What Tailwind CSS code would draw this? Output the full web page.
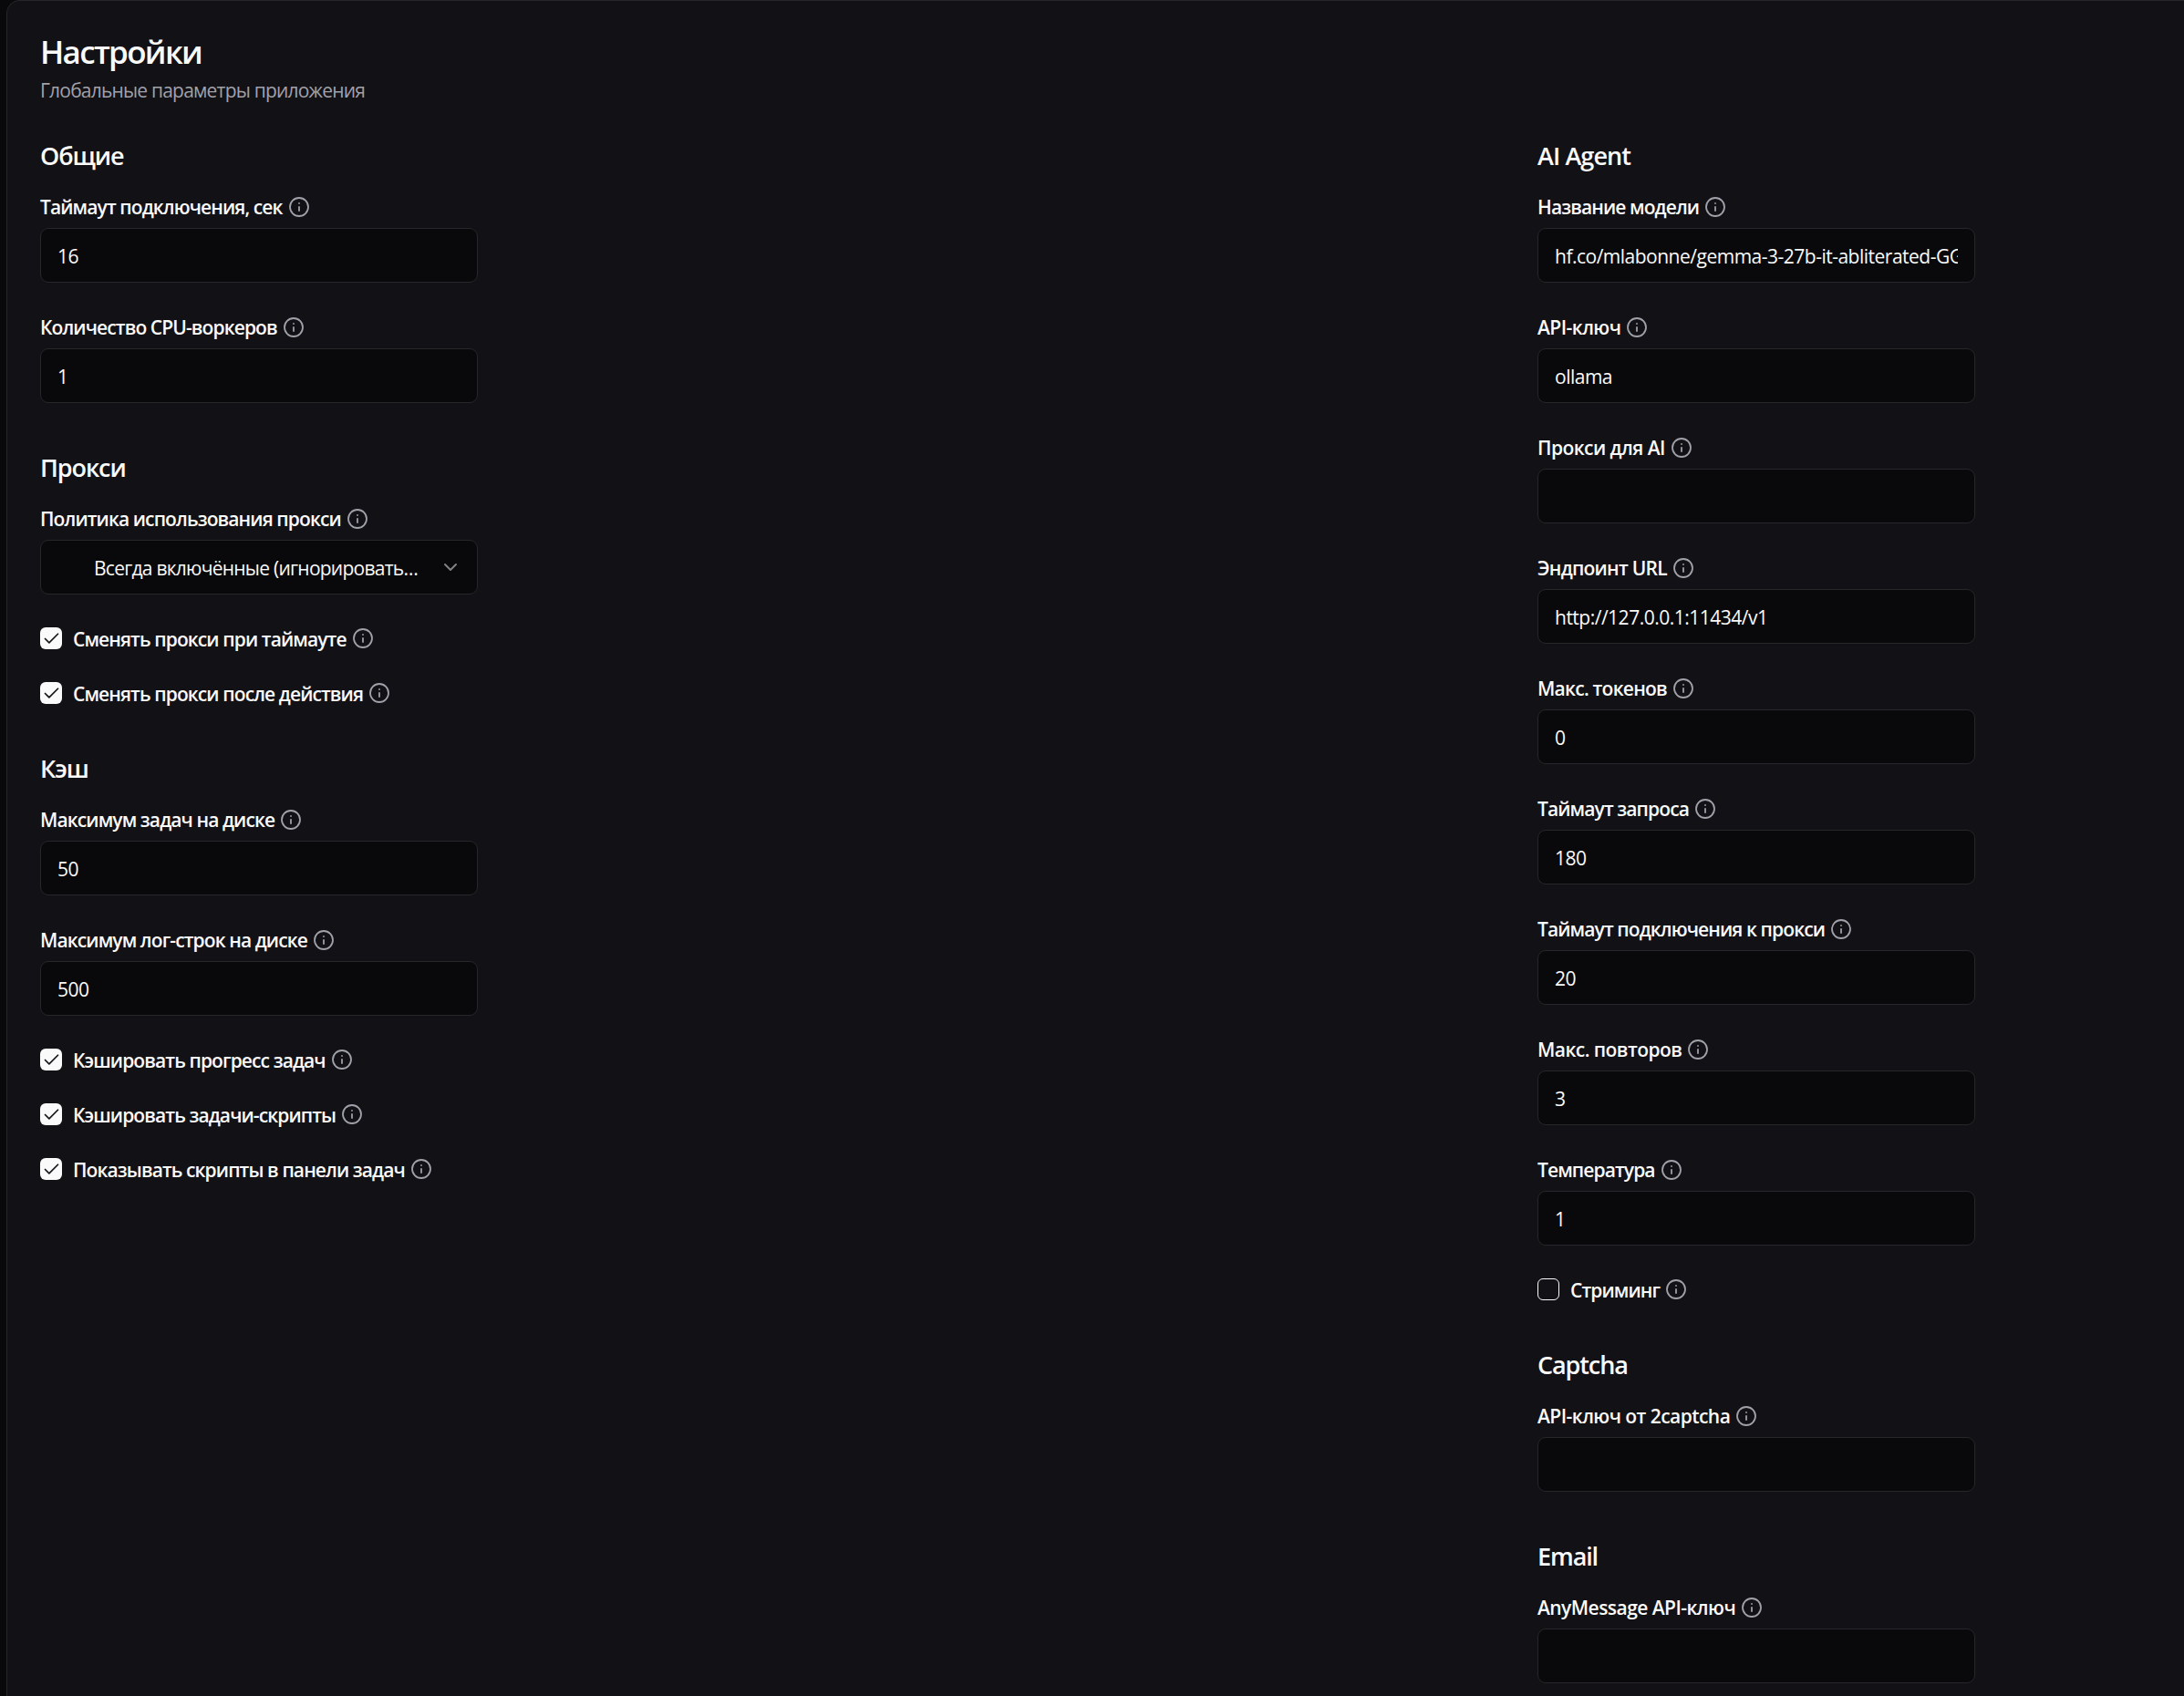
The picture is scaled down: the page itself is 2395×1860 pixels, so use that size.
<!DOCTYPE html>
<html lang="ru">
<head>
    <meta charset="UTF-8">
    <title>Настройки</title>
    <script src="https://cdn.jsdelivr.net/npm/@tailwindcss/browser@4"></script>
</head>
<body class="bg-[#09090b] text-[#fafafa] font-['Open_Sans',sans-serif] h-[1860px] overflow-hidden">
    <main class="ml-[7px] h-[1860px] overflow-hidden bg-[#111116] border-l border-t border-[#27272a] rounded-tl-[15px] pl-[36px] pr-[36px] pt-[32px]">
        <h1 class="text-[35px] leading-[48px] font-semibold tracking-[-1.7px]">Настройки</h1>
        <p class="text-[21px] leading-[30px] text-[#a1a1aa] tracking-[-0.8px] mt-[3px]">Глобальные параметры приложения</p>

        <div class="grid grid-cols-[1642px_1fr] mt-[37px]">
            <!-- Left column -->
            <div class="flex flex-col gap-[51px]">
                <section class="w-[480px]">
                    <h2 class="text-[27px] leading-[40px] font-semibold tracking-[-1.1px] mb-[23px]">Общие</h2>
                    <div class="flex flex-col gap-[36px]">
                        <div>
                            <label class="flex items-center gap-[6px] h-[27px] mb-[9px] text-[21px] font-[550] tracking-[-0.9px]">Таймаут подключения, сек
                                <svg class="size-[24px] -mt-[2px] text-[#a1a1aa]" viewBox="0 0 24 24" fill="none" stroke="currentColor" stroke-width="1.8" stroke-linecap="round" stroke-linejoin="round"><circle cx="12" cy="12" r="10"/><path d="M12 16v-4"/><path d="M12 8h.01"/></svg>
                            </label>
                            <input type="text" value="16" class="w-[480px] h-[60px] px-[18px] pt-[2px] rounded-[9px] bg-[#09090b] border border-[#27272a] text-[21px] tracking-[-0.5px] outline-none">
                        </div>
                        <div>
                            <label class="flex items-center gap-[6px] h-[27px] mb-[9px] text-[21px] font-[550] tracking-[-0.9px]">Количество CPU-воркеров
                                <svg class="size-[24px] -mt-[2px] text-[#a1a1aa]" viewBox="0 0 24 24" fill="none" stroke="currentColor" stroke-width="1.8" stroke-linecap="round" stroke-linejoin="round"><circle cx="12" cy="12" r="10"/><path d="M12 16v-4"/><path d="M12 8h.01"/></svg>
                            </label>
                            <input type="text" value="1" class="w-[480px] h-[60px] px-[18px] pt-[2px] rounded-[9px] bg-[#09090b] border border-[#27272a] text-[21px] tracking-[-0.5px] outline-none">
                        </div>
                    </div>
                </section>

                <section class="w-[480px]">
                    <h2 class="text-[27px] leading-[40px] font-semibold tracking-[-1.1px] mb-[23px]">Прокси</h2>
                    <div class="flex flex-col gap-[36px]">
                        <div>
                            <label class="flex items-center gap-[6px] h-[27px] mb-[9px] text-[21px] font-[550] tracking-[-0.9px]">Политика использования прокси
                                <svg class="size-[24px] -mt-[2px] text-[#a1a1aa]" viewBox="0 0 24 24" fill="none" stroke="currentColor" stroke-width="1.8" stroke-linecap="round" stroke-linejoin="round"><circle cx="12" cy="12" r="10"/><path d="M12 16v-4"/><path d="M12 8h.01"/></svg>
                            </label>
                            <button class="flex items-center justify-between w-[480px] h-[60px] pl-[58px] pr-[17px] pt-[3px] rounded-[9px] bg-[#09090b] border border-[#27272a] text-[21px] tracking-[-0.75px]">
                                <span class="whitespace-nowrap">Всегда включённые (игнорировать…</span>
                                <svg class="size-[24px] -mt-[3px] shrink-0 text-[#fafafa]/50" viewBox="0 0 24 24" fill="none" stroke="currentColor" stroke-width="2" stroke-linecap="round" stroke-linejoin="round"><path d="m6 9 6 6 6-6"/></svg>
                            </button>
                        </div>
                        <label class="flex items-center gap-[12px] h-[24px] text-[21px] font-[550] tracking-[-0.9px]">
                            <span class="flex items-center justify-center size-[24px] rounded-[6px] bg-[#fafafa] text-[#18181b]"><svg class="size-[21px]" viewBox="0 0 24 24" fill="none" stroke="currentColor" stroke-width="2" stroke-linecap="round" stroke-linejoin="round"><path d="M20 6 9 17l-5-5"/></svg></span>
                            <span class="mt-[3px]">Сменять прокси при таймауте</span>
                            <svg class="size-[24px] -ml-[6px] text-[#a1a1aa]" viewBox="0 0 24 24" fill="none" stroke="currentColor" stroke-width="1.8" stroke-linecap="round" stroke-linejoin="round"><circle cx="12" cy="12" r="10"/><path d="M12 16v-4"/><path d="M12 8h.01"/></svg>
                        </label>
                        <label class="flex items-center gap-[12px] h-[24px] text-[21px] font-[550] tracking-[-0.9px]">
                            <span class="flex items-center justify-center size-[24px] rounded-[6px] bg-[#fafafa] text-[#18181b]"><svg class="size-[21px]" viewBox="0 0 24 24" fill="none" stroke="currentColor" stroke-width="2" stroke-linecap="round" stroke-linejoin="round"><path d="M20 6 9 17l-5-5"/></svg></span>
                            <span class="mt-[3px]">Сменять прокси после действия</span>
                            <svg class="size-[24px] -ml-[6px] text-[#a1a1aa]" viewBox="0 0 24 24" fill="none" stroke="currentColor" stroke-width="1.8" stroke-linecap="round" stroke-linejoin="round"><circle cx="12" cy="12" r="10"/><path d="M12 16v-4"/><path d="M12 8h.01"/></svg>
                        </label>
                    </div>
                </section>

                <section class="w-[480px]">
                    <h2 class="text-[27px] leading-[40px] font-semibold tracking-[-1.1px] mb-[23px]">Кэш</h2>
                    <div class="flex flex-col gap-[36px]">
                        <div>
                            <label class="flex items-center gap-[6px] h-[27px] mb-[9px] text-[21px] font-[550] tracking-[-0.9px]">Максимум задач на диске
                                <svg class="size-[24px] -mt-[2px] text-[#a1a1aa]" viewBox="0 0 24 24" fill="none" stroke="currentColor" stroke-width="1.8" stroke-linecap="round" stroke-linejoin="round"><circle cx="12" cy="12" r="10"/><path d="M12 16v-4"/><path d="M12 8h.01"/></svg>
                            </label>
                            <input type="text" value="50" class="w-[480px] h-[60px] px-[18px] pt-[2px] rounded-[9px] bg-[#09090b] border border-[#27272a] text-[21px] tracking-[-0.5px] outline-none">
                        </div>
                        <div>
                            <label class="flex items-center gap-[6px] h-[27px] mb-[9px] text-[21px] font-[550] tracking-[-0.9px]">Максимум лог-строк на диске
                                <svg class="size-[24px] -mt-[2px] text-[#a1a1aa]" viewBox="0 0 24 24" fill="none" stroke="currentColor" stroke-width="1.8" stroke-linecap="round" stroke-linejoin="round"><circle cx="12" cy="12" r="10"/><path d="M12 16v-4"/><path d="M12 8h.01"/></svg>
                            </label>
                            <input type="text" value="500" class="w-[480px] h-[60px] px-[18px] pt-[2px] rounded-[9px] bg-[#09090b] border border-[#27272a] text-[21px] tracking-[-0.5px] outline-none">
                        </div>
                        <label class="flex items-center gap-[12px] h-[24px] text-[21px] font-[550] tracking-[-0.9px]">
                            <span class="flex items-center justify-center size-[24px] rounded-[6px] bg-[#fafafa] text-[#18181b]"><svg class="size-[21px]" viewBox="0 0 24 24" fill="none" stroke="currentColor" stroke-width="2" stroke-linecap="round" stroke-linejoin="round"><path d="M20 6 9 17l-5-5"/></svg></span>
                            <span class="mt-[3px]">Кэшировать прогресс задач</span>
                            <svg class="size-[24px] -ml-[6px] text-[#a1a1aa]" viewBox="0 0 24 24" fill="none" stroke="currentColor" stroke-width="1.8" stroke-linecap="round" stroke-linejoin="round"><circle cx="12" cy="12" r="10"/><path d="M12 16v-4"/><path d="M12 8h.01"/></svg>
                        </label>
                        <label class="flex items-center gap-[12px] h-[24px] text-[21px] font-[550] tracking-[-0.9px]">
                            <span class="flex items-center justify-center size-[24px] rounded-[6px] bg-[#fafafa] text-[#18181b]"><svg class="size-[21px]" viewBox="0 0 24 24" fill="none" stroke="currentColor" stroke-width="2" stroke-linecap="round" stroke-linejoin="round"><path d="M20 6 9 17l-5-5"/></svg></span>
                            <span class="mt-[3px]">Кэшировать задачи-скрипты</span>
                            <svg class="size-[24px] -ml-[6px] text-[#a1a1aa]" viewBox="0 0 24 24" fill="none" stroke="currentColor" stroke-width="1.8" stroke-linecap="round" stroke-linejoin="round"><circle cx="12" cy="12" r="10"/><path d="M12 16v-4"/><path d="M12 8h.01"/></svg>
                        </label>
                        <label class="flex items-center gap-[12px] h-[24px] whitespace-nowrap text-[21px] font-[550] tracking-[-0.9px]">
                            <span class="flex items-center justify-center size-[24px] rounded-[6px] bg-[#fafafa] text-[#18181b]"><svg class="size-[21px]" viewBox="0 0 24 24" fill="none" stroke="currentColor" stroke-width="2" stroke-linecap="round" stroke-linejoin="round"><path d="M20 6 9 17l-5-5"/></svg></span>
                            <span class="mt-[3px]">Показывать скрипты в панели задач</span>
                            <svg class="size-[24px] -ml-[6px] text-[#a1a1aa]" viewBox="0 0 24 24" fill="none" stroke="currentColor" stroke-width="1.8" stroke-linecap="round" stroke-linejoin="round"><circle cx="12" cy="12" r="10"/><path d="M12 16v-4"/><path d="M12 8h.01"/></svg>
                        </label>
                    </div>
                </section>
            </div>

            <!-- Right column -->
            <div class="flex flex-col gap-[51px]">
                <section class="w-[480px]">
                    <h2 class="text-[27px] leading-[40px] font-semibold tracking-[-0.9px] mb-[23px]">AI Agent</h2>
                    <div class="flex flex-col gap-[36px]">
                        <div>
                            <label class="flex items-center gap-[6px] h-[27px] mb-[9px] text-[21px] font-[550] tracking-[-0.9px]">Название модели
                                <svg class="size-[24px] -mt-[2px] text-[#a1a1aa]" viewBox="0 0 24 24" fill="none" stroke="currentColor" stroke-width="1.8" stroke-linecap="round" stroke-linejoin="round"><circle cx="12" cy="12" r="10"/><path d="M12 16v-4"/><path d="M12 8h.01"/></svg>
                            </label>
                            <input type="text" value="hf.co/mlabonne/gemma-3-27b-it-abliterated-GGUF:Q4_K_M" class="w-[480px] h-[60px] px-[18px] pt-[2px] rounded-[9px] bg-[#09090b] border border-[#27272a] text-[21px] tracking-[-0.5px] outline-none">
                        </div>
                        <div>
                            <label class="flex items-center gap-[6px] h-[27px] mb-[9px] text-[21px] font-[550] tracking-[-0.55px]">API-ключ
                                <svg class="size-[24px] -mt-[2px] text-[#a1a1aa]" viewBox="0 0 24 24" fill="none" stroke="currentColor" stroke-width="1.8" stroke-linecap="round" stroke-linejoin="round"><circle cx="12" cy="12" r="10"/><path d="M12 16v-4"/><path d="M12 8h.01"/></svg>
                            </label>
                            <input type="text" value="ollama" class="w-[480px] h-[60px] px-[18px] pt-[2px] rounded-[9px] bg-[#09090b] border border-[#27272a] text-[21px] tracking-[-0.5px] outline-none">
                        </div>
                        <div>
                            <label class="flex items-center gap-[6px] h-[27px] mb-[9px] text-[21px] font-[550] tracking-[-0.55px]">Прокси для AI
                                <svg class="size-[24px] -mt-[2px] text-[#a1a1aa]" viewBox="0 0 24 24" fill="none" stroke="currentColor" stroke-width="1.8" stroke-linecap="round" stroke-linejoin="round"><circle cx="12" cy="12" r="10"/><path d="M12 16v-4"/><path d="M12 8h.01"/></svg>
                            </label>
                            <input type="text" value="" class="w-[480px] h-[60px] px-[18px] pt-[2px] rounded-[9px] bg-[#09090b] border border-[#27272a] text-[21px] tracking-[-0.5px] outline-none">
                        </div>
                        <div>
                            <label class="flex items-center gap-[6px] h-[27px] mb-[9px] text-[21px] font-[550] tracking-[-0.75px]">Эндпоинт URL
                                <svg class="size-[24px] -mt-[2px] text-[#a1a1aa]" viewBox="0 0 24 24" fill="none" stroke="currentColor" stroke-width="1.8" stroke-linecap="round" stroke-linejoin="round"><circle cx="12" cy="12" r="10"/><path d="M12 16v-4"/><path d="M12 8h.01"/></svg>
                            </label>
                            <input type="text" value="http://127.0.0.1:11434/v1" class="w-[480px] h-[60px] px-[18px] pt-[2px] rounded-[9px] bg-[#09090b] border border-[#27272a] text-[21px] tracking-[-0.5px] outline-none">
                        </div>
                        <div>
                            <label class="flex items-center gap-[6px] h-[27px] mb-[9px] text-[21px] font-[550] tracking-[-0.75px]">Макс. токенов
                                <svg class="size-[24px] -mt-[2px] text-[#a1a1aa]" viewBox="0 0 24 24" fill="none" stroke="currentColor" stroke-width="1.8" stroke-linecap="round" stroke-linejoin="round"><circle cx="12" cy="12" r="10"/><path d="M12 16v-4"/><path d="M12 8h.01"/></svg>
                            </label>
                            <input type="text" value="0" class="w-[480px] h-[60px] px-[18px] pt-[2px] rounded-[9px] bg-[#09090b] border border-[#27272a] text-[21px] tracking-[-0.5px] outline-none">
                        </div>
                        <div>
                            <label class="flex items-center gap-[6px] h-[27px] mb-[9px] text-[21px] font-[550] tracking-[-0.9px]">Таймаут запроса
                                <svg class="size-[24px] -mt-[2px] text-[#a1a1aa]" viewBox="0 0 24 24" fill="none" stroke="currentColor" stroke-width="1.8" stroke-linecap="round" stroke-linejoin="round"><circle cx="12" cy="12" r="10"/><path d="M12 16v-4"/><path d="M12 8h.01"/></svg>
                            </label>
                            <input type="text" value="180" class="w-[480px] h-[60px] px-[18px] pt-[2px] rounded-[9px] bg-[#09090b] border border-[#27272a] text-[21px] tracking-[-0.5px] outline-none">
                        </div>
                        <div>
                            <label class="flex items-center gap-[6px] h-[27px] mb-[9px] text-[21px] font-[550] tracking-[-0.9px]">Таймаут подключения к прокси
                                <svg class="size-[24px] -mt-[2px] text-[#a1a1aa]" viewBox="0 0 24 24" fill="none" stroke="currentColor" stroke-width="1.8" stroke-linecap="round" stroke-linejoin="round"><circle cx="12" cy="12" r="10"/><path d="M12 16v-4"/><path d="M12 8h.01"/></svg>
                            </label>
                            <input type="text" value="20" class="w-[480px] h-[60px] px-[18px] pt-[2px] rounded-[9px] bg-[#09090b] border border-[#27272a] text-[21px] tracking-[-0.5px] outline-none">
                        </div>
                        <div>
                            <label class="flex items-center gap-[6px] h-[27px] mb-[9px] text-[21px] font-[550] tracking-[-0.55px]">Макс. повторов
                                <svg class="size-[24px] -mt-[2px] text-[#a1a1aa]" viewBox="0 0 24 24" fill="none" stroke="currentColor" stroke-width="1.8" stroke-linecap="round" stroke-linejoin="round"><circle cx="12" cy="12" r="10"/><path d="M12 16v-4"/><path d="M12 8h.01"/></svg>
                            </label>
                            <input type="text" value="3" class="w-[480px] h-[60px] px-[18px] pt-[2px] rounded-[9px] bg-[#09090b] border border-[#27272a] text-[21px] tracking-[-0.5px] outline-none">
                        </div>
                        <div>
                            <label class="flex items-center gap-[6px] h-[27px] mb-[9px] text-[21px] font-[550] tracking-[-0.9px]">Температура
                                <svg class="size-[24px] -mt-[2px] text-[#a1a1aa]" viewBox="0 0 24 24" fill="none" stroke="currentColor" stroke-width="1.8" stroke-linecap="round" stroke-linejoin="round"><circle cx="12" cy="12" r="10"/><path d="M12 16v-4"/><path d="M12 8h.01"/></svg>
                            </label>
                            <input type="text" value="1" class="w-[480px] h-[60px] px-[18px] pt-[2px] rounded-[9px] bg-[#09090b] border border-[#27272a] text-[21px] tracking-[-0.5px] outline-none">
                        </div>
                        <label class="flex items-center gap-[12px] h-[24px] text-[21px] font-[550] tracking-[-0.9px]">
                            <span class="size-[24px] rounded-[6px] border border-[#fafafa]"></span>
                            <span class="mt-[3px]">Стриминг</span>
                            <svg class="size-[24px] -ml-[6px] text-[#a1a1aa]" viewBox="0 0 24 24" fill="none" stroke="currentColor" stroke-width="1.8" stroke-linecap="round" stroke-linejoin="round"><circle cx="12" cy="12" r="10"/><path d="M12 16v-4"/><path d="M12 8h.01"/></svg>
                        </label>
                    </div>
                </section>

                <section class="w-[480px]">
                    <h2 class="text-[27px] leading-[40px] font-semibold tracking-[-1.1px] mb-[23px]">Captcha</h2>
                    <label class="flex items-center gap-[6px] h-[27px] mb-[9px] text-[21px] font-[550] tracking-[-0.55px]">API-ключ от 2captcha
                        <svg class="size-[24px] -mt-[2px] text-[#a1a1aa]" viewBox="0 0 24 24" fill="none" stroke="currentColor" stroke-width="1.8" stroke-linecap="round" stroke-linejoin="round"><circle cx="12" cy="12" r="10"/><path d="M12 16v-4"/><path d="M12 8h.01"/></svg>
                    </label>
                    <input type="text" value="" class="w-[480px] h-[60px] px-[18px] pt-[2px] rounded-[9px] bg-[#09090b] border border-[#27272a] text-[21px] tracking-[-0.5px] outline-none">
                </section>

                <section class="w-[480px]">
                    <h2 class="text-[27px] leading-[40px] font-semibold tracking-[-1.1px] mb-[23px]">Email</h2>
                    <label class="flex items-center gap-[6px] h-[27px] mb-[9px] text-[21px] font-[550] tracking-[-0.55px]">AnyMessage API-ключ
                        <svg class="size-[24px] -mt-[2px] text-[#a1a1aa]" viewBox="0 0 24 24" fill="none" stroke="currentColor" stroke-width="1.8" stroke-linecap="round" stroke-linejoin="round"><circle cx="12" cy="12" r="10"/><path d="M12 16v-4"/><path d="M12 8h.01"/></svg>
                    </label>
                    <input type="text" value="" class="w-[480px] h-[60px] px-[18px] pt-[2px] rounded-[9px] bg-[#09090b] border border-[#27272a] text-[21px] tracking-[-0.5px] outline-none">
                </section>
            </div>
        </div>
    </main>
</body>
</html>
